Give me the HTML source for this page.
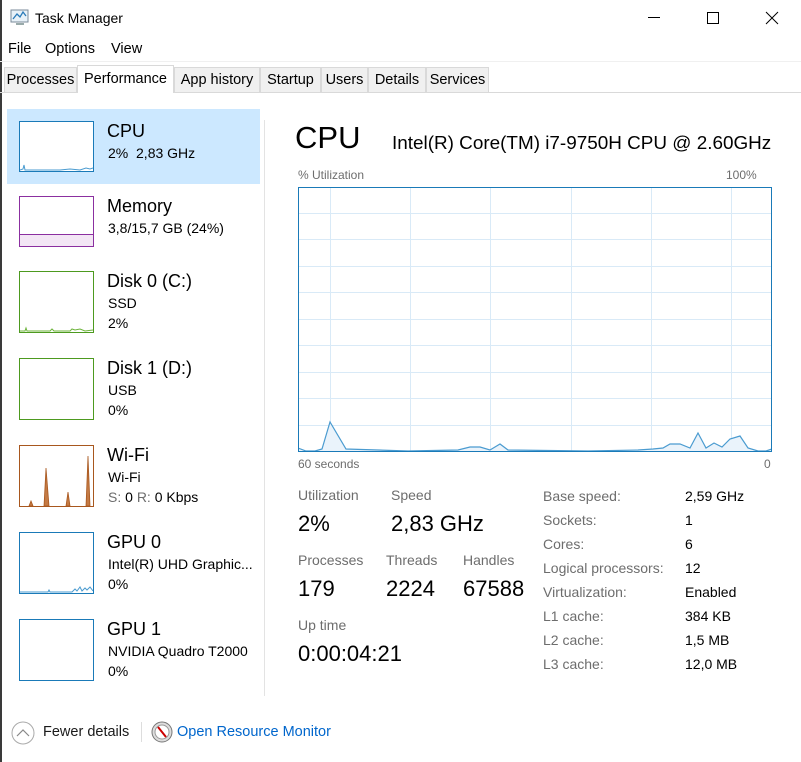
<!DOCTYPE html>
<html><head><meta charset="utf-8"><style>
*{margin:0;padding:0;box-sizing:border-box}
body{width:801px;height:762px;background:#fff;font-family:"Liberation Sans",sans-serif;color:#000;position:relative;overflow:hidden}
.t{position:absolute;white-space:nowrap}
.g{color:#6d6d6d}
.tab{position:absolute;top:67px;height:25px;border:1px solid #d9d9d9;border-bottom:none;background:#f0f0f0;font-size:14.5px;line-height:25px;text-align:center;color:#000}
.th{position:absolute;left:19px;width:75px;border:1px solid}
</style></head><body>
<div style="position:absolute;left:0;top:0;width:2px;height:762px;background:#3a3a3a"></div>
<svg class="t" style="left:10px;top:9px" width="20" height="18" viewBox="0 0 20 18"><rect x="1" y="1" width="17" height="12" fill="#e8f1f8" stroke="#7a8a99"/><polyline points="3,10 7,5 10,8 13,3 16,7" fill="none" stroke="#2a7ab8" stroke-width="1.3"/><rect x="6" y="14" width="8" height="2" fill="#9aa"/></svg>
<div class="t" style="left:35px;top:10px;font-size:14px;line-height:16px">Task Manager</div>
<div class="t" style="left:648px;top:17px;width:12px;height:1px;background:#000"></div>
<div class="t" style="left:707px;top:12px;width:12px;height:12px;border:1px solid #000"></div>
<svg class="t" style="left:765px;top:11px" width="14" height="14"><path d="M1 1L13 13M13 1L1 13" stroke="#000" stroke-width="1"/></svg>
<div class="t" style="left:8px;top:41px;font-size:14.5px;line-height:16px">File</div>
<div class="t" style="left:45px;top:41px;font-size:14.5px;line-height:16px">Options</div>
<div class="t" style="left:111px;top:41px;font-size:14.5px;line-height:16px">View</div>
<div class="t" style="left:0;top:61px;width:801px;height:1px;background:#f0f0f0"></div>
<div class="tab" style="left:4px;width:73px">Processes</div>
<div class="tab" style="left:77px;top:65px;height:28px;width:97px;background:#fff;line-height:26px;z-index:2">Performance</div>
<div class="tab" style="left:174px;width:86px">App history</div>
<div class="tab" style="left:260px;width:61px">Startup</div>
<div class="tab" style="left:321px;width:47px">Users</div>
<div class="tab" style="left:368px;width:58px">Details</div>
<div class="tab" style="left:426px;width:63px">Services</div>
<div class="t" style="left:0;top:92px;width:801px;height:1px;background:#d9d9d9"></div>
<div class="t" style="left:7px;top:109px;width:253px;height:75px;background:#cce8ff"></div>
<div class="t" style="left:264px;top:120px;width:1px;height:576px;background:#e3e3e3"></div>

<div class="th" style="top:121px;height:51px;border-color:#1a7ab8;background:#fff"><svg width="73" height="49" style="position:absolute;left:0;top:0"><polyline points="0,48 3,47 4,43 5,48 40,48 50,47 60,48 66,46 70,47 73,46" fill="none" stroke="#4a9bd0"/></svg></div>
<div class="t" style="left:107px;top:120px;font-size:18px;line-height:22px">CPU</div>
<div class="t" style="left:108px;top:145px;font-size:14px;line-height:16px">2%&nbsp; 2,83 GHz</div>

<div class="th" style="top:196px;height:51px;border-color:#8b2fa0"><div style="position:absolute;left:0;right:0;top:37px;bottom:0;background:#f3e6f5;border-top:1px solid #8b2fa0"></div></div>
<div class="t" style="left:107px;top:195px;font-size:18px;line-height:22px">Memory</div>
<div class="t" style="left:108px;top:220px;font-size:14px;line-height:16px">3,8/15,7 GB (24%)</div>

<div class="th" style="top:271px;height:62px;border-color:#4d9a1f"><svg width="73" height="60" style="position:absolute"><polyline points="0,59 5,59 6,56 7,59 30,59 32,57 34,59 50,59 52,57 55,58 60,57 65,59 73,58" fill="none" stroke="#6cb33a"/></svg></div>
<div class="t" style="left:107px;top:270px;font-size:18px;line-height:22px">Disk 0 (C:)</div>
<div class="t" style="left:108px;top:295px;font-size:14px;line-height:16px">SSD</div>
<div class="t" style="left:108px;top:315px;font-size:14px;line-height:16px">2%</div>

<div class="th" style="top:358px;height:62px;border-color:#4d9a1f"></div>
<div class="t" style="left:107px;top:357px;font-size:18px;line-height:22px">Disk 1 (D:)</div>
<div class="t" style="left:108px;top:382px;font-size:14px;line-height:16px">USB</div>
<div class="t" style="left:108px;top:402px;font-size:14px;line-height:16px">0%</div>

<div class="th" style="top:445px;height:62px;border-color:#a8571e"><svg width="73" height="60" style="position:absolute"><path d="M9,60 L11,55 L13,60 Z M24,60 L26,22 L29,60 Z M46,60 L48,46 L50,60 Z M66,60 L68,10 L70,60 Z" fill="#c47a44" stroke="#a8571e" stroke-width="0.8"/></svg></div>
<div class="t" style="left:107px;top:444px;font-size:18px;line-height:22px">Wi-Fi</div>
<div class="t" style="left:108px;top:469px;font-size:14px;line-height:16px">Wi-Fi</div>
<div class="t" style="left:108px;top:489px;font-size:14px;line-height:16px"><span class="g">S:</span> 0 <span class="g">R:</span> 0 Kbps</div>

<div class="th" style="top:532px;height:62px;border-color:#1a7ab8"><svg width="73" height="60" style="position:absolute"><polyline points="0,59 28,59 29,57 30,59 52,59 55,56 57,58 60,54 62,58 65,55 67,57 70,54 73,58" fill="none" stroke="#4a9bd0"/></svg></div>
<div class="t" style="left:107px;top:531px;font-size:18px;line-height:22px">GPU 0</div>
<div class="t" style="left:108px;top:556px;font-size:14px;line-height:16px">Intel(R) UHD Graphic...</div>
<div class="t" style="left:108px;top:576px;font-size:14px;line-height:16px">0%</div>

<div class="th" style="top:619px;height:62px;border-color:#1a7ab8"></div>
<div class="t" style="left:107px;top:618px;font-size:18px;line-height:22px">GPU 1</div>
<div class="t" style="left:108px;top:643px;font-size:14px;line-height:16px">NVIDIA Quadro T2000</div>
<div class="t" style="left:108px;top:663px;font-size:14px;line-height:16px">0%</div>

<div class="t" style="left:295px;top:120px;font-size:31px;line-height:36px">CPU</div>
<div class="t" style="left:392px;top:133px;font-size:18.9px;line-height:22px">Intel(R) Core(TM) i7-9750H CPU @ 2.60GHz</div>
<div class="t g" style="left:298px;top:168px;font-size:12px;line-height:14px">% Utilization</div>
<div class="t g" style="left:726px;top:168px;font-size:12px;line-height:14px">100%</div>
<svg class="t" style="left:298px;top:187px" width="474" height="265" viewBox="0 0 474 265">
<g stroke="#d9eaf7" stroke-width="1">
<line x1="32.5" y1="0" x2="32.5" y2="265"/><line x1="112.5" y1="0" x2="112.5" y2="265"/><line x1="192.5" y1="0" x2="192.5" y2="265"/><line x1="273.5" y1="0" x2="273.5" y2="265"/><line x1="353.5" y1="0" x2="353.5" y2="265"/><line x1="433.5" y1="0" x2="433.5" y2="265"/>
<line x1="0" y1="26.5" x2="474" y2="26.5"/><line x1="0" y1="52.5" x2="474" y2="52.5"/><line x1="0" y1="79.5" x2="474" y2="79.5"/><line x1="0" y1="105.5" x2="474" y2="105.5"/><line x1="0" y1="132.5" x2="474" y2="132.5"/><line x1="0" y1="158.5" x2="474" y2="158.5"/><line x1="0" y1="185.5" x2="474" y2="185.5"/><line x1="0" y1="211.5" x2="474" y2="211.5"/><line x1="0" y1="238.5" x2="474" y2="238.5"/>
</g>
<polygon points="0,261 8,264 17,264 24,262 32,235 48,262 110,264 160,263 172,260 182,260 192,263 202,257 210,263 290,264 340,263 355,262 365,261 372,257 382,257 392,261 400,246 408,261 416,256 424,260 432,252 442,249 450,261 460,264 468,264 474,262 474,264 0,264" fill="#eaf3fb"/>
<polyline points="0,261 8,264 17,264 24,262 32,235 48,262 110,264 160,263 172,260 182,260 192,263 202,257 210,263 290,264 340,263 355,262 365,261 372,257 382,257 392,261 400,246 408,261 416,256 424,260 432,252 442,249 450,261 460,264 468,264 474,262" fill="none" stroke="#4a9bd0" stroke-width="1.2"/>
<rect x="0.5" y="0.5" width="473" height="264" fill="none" stroke="#1a7ab8"/>
</svg>
<div class="t g" style="left:298px;top:457px;font-size:12px;line-height:14px">60 seconds</div>
<div class="t g" style="left:764px;top:457px;font-size:12px;line-height:14px">0</div>

<div class="t g" style="left:298px;top:487px;font-size:14px;line-height:16px">Utilization</div>
<div class="t g" style="left:391px;top:487px;font-size:14px;line-height:16px">Speed</div>
<div class="t" style="left:298px;top:511px;font-size:22px;line-height:26px">2%</div>
<div class="t" style="left:391px;top:511px;font-size:22px;line-height:26px">2,83 GHz</div>
<div class="t g" style="left:298px;top:552px;font-size:14px;line-height:16px">Processes</div>
<div class="t g" style="left:386px;top:552px;font-size:14px;line-height:16px">Threads</div>
<div class="t g" style="left:463px;top:552px;font-size:14px;line-height:16px">Handles</div>
<div class="t" style="left:298px;top:576px;font-size:22px;line-height:26px">179</div>
<div class="t" style="left:386px;top:576px;font-size:22px;line-height:26px">2224</div>
<div class="t" style="left:463px;top:576px;font-size:22px;line-height:26px">67588</div>
<div class="t g" style="left:298px;top:617px;font-size:14px;line-height:16px">Up time</div>
<div class="t" style="left:298px;top:641px;font-size:22px;line-height:26px">0:00:04:21</div>

<div class="t g" style="left:543px;top:484px;font-size:14px;line-height:24px">Base speed:<br>Sockets:<br>Cores:<br>Logical processors:<br>Virtualization:<br>L1 cache:<br>L2 cache:<br>L3 cache:</div>
<div class="t" style="left:685px;top:484px;font-size:14px;line-height:24px">2,59 GHz<br>1<br>6<br>12<br>Enabled<br>384 KB<br>1,5 MB<br>12,0 MB</div>

<svg class="t" style="left:11px;top:721px" width="24" height="24"><circle cx="12" cy="12" r="11" fill="#fff" stroke="#aaa"/><polyline points="6,15 12,9 18,15" fill="none" stroke="#888" stroke-width="1.2"/></svg>
<div class="t" style="left:43px;top:724px;font-size:14.5px;line-height:16px;color:#1a1a1a">Fewer details</div>
<div class="t" style="left:141px;top:722px;width:1px;height:20px;background:#ddd"></div>
<svg class="t" style="left:151px;top:721px" width="22" height="22"><circle cx="11" cy="11" r="10" fill="#ddd" stroke="#777"/><circle cx="11" cy="11" r="7" fill="#fff" stroke="#999"/><line x1="7" y1="6" x2="15" y2="16" stroke="#c00" stroke-width="2"/></svg>
<div class="t" style="left:177px;top:724px;font-size:14.5px;line-height:16px;color:#0066cc">Open Resource Monitor</div>
</body></html>
